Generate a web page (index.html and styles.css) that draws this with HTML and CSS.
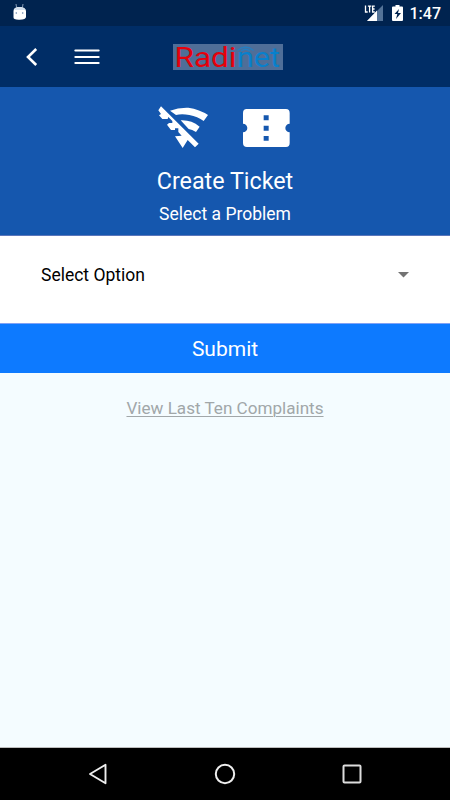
FILE: index.html
```html
<!DOCTYPE html>
<html lang="en">
<head>
<meta charset="utf-8">
<title>Create Ticket</title>
<link rel="stylesheet" href="styles.css">
</head>
<body>
<div class="status">
  <svg class="droid" width="16" height="20" viewBox="0 0 16 20"><path d="M4.500 4 4 1M10.500 4l.5-3" stroke="#8299b5" stroke-width="1"/><path d="M1.500 8Q1.500 4 7.500 4T14 8V14Q14 16.500 7.500 16.700T1.500 14Z" fill="#fff"/><path d="M2 7Q3 4 7.500 4T13.500 7Z" fill="#d3dfed"/><circle cx="4.300" cy="10" r=".8" fill="#6682a8"/><circle cx="10.700" cy="10" r=".8" fill="#6682a8"/></svg>
  <div class="indicators">
    <svg width="20" height="18" viewBox="0 0 20 18"><path d="M19 1v16H3Z" fill="#547397"/><path d="M13 6.500V17H3Z" fill="#fff"/><path d="M0 0h11v9H0Z" fill="#00234f"/><path d="M1.500 1.500v6.500h2.200M3.900 2.100h3.400M5.600 2v6.600M10.800 2.100H8.600v5.900h2.200M8.600 5h2" fill="none" stroke="#fff" stroke-width="1.300"/></svg>
    <svg class="battery" width="12" height="18" viewBox="0 0 12 18"><path d="M3.500 1h4v1.500H10q1 0 1 1V16q0 1-1 1H1q-1 0-1-1V3.500q0-1 1-1h2.500Z" fill="#fff"/><path d="M7 5 2.500 10h2.800L4 15l5-6H6Z" fill="#00234f"/></svg>
    <span>1:47</span>
  </div>
</div>
<header class="header">
  <svg class="back" width="14" height="20" viewBox="0 0 14 20"><path d="M11.200 2 3 10l8.200 8" fill="none" stroke="#fff" stroke-width="2.600"/></svg>
  <svg class="menu" width="26" height="18" viewBox="0 0 26 18"><path d="M1.400 2.500h23.200M1.400 9h23.200M1.400 15h23.200" stroke="#fff" stroke-width="2.200" stroke-linecap="round"/></svg>
  <svg class="logo" width="110" height="26" viewBox="0 0 110 26"><path d="M0 0h110v26H0Z" fill="#4f6e98"/><text x="1.500" y="22.500" textLength="62" lengthAdjust="spacingAndGlyphs" class="logo-text red">Radi</text><text x="64" y="22.500" textLength="43" lengthAdjust="spacingAndGlyphs" class="logo-text blue">net</text><path d="M64.500 6.500q8-7 16 0M68 7q4.500-3.500 9 0" fill="none" stroke="#257fc2" stroke-width="1.300"/></svg>
</header>
<section class="hero">
  <div class="icons">
    <svg width="50" height="43" viewBox="11 19 150 129"><g fill="#fff"><path d="M20 20 133 132 122 143 100 121 85 145 62 110 82 108 72 97V86H62V91H50L38 75 44 70H54V64L42 52 40 58H24L14 47 20 43 12 32Z"/><path d="M47 33Q72 23 102 24 136 29 161 46L148 64Q130 51 105 46 82 41 65 46Z"/><path d="M79 62Q110 60 136 81L125 97Q113 89 103 88Z"/></g></svg>
    <svg width="47" height="38" viewBox="278 41 141 114"><path fill="#fff" fill-rule="evenodd" d="M289 41H407Q418 41 418 53V85A13 13 0 0 0 418 111V143Q418 155 407 155H290Q278 155 278 143V111A13 13 0 0 0 278 85V53Q278 41 289 41ZM340 60v15h15V60ZM340 91v15h15V91ZM340 122v14h15v-14Z"/></svg>
  </div>
  <h1>Create Ticket</h1>
  <p>Select a Problem</p>
</section>
<div class="select"><span>Select Option</span><svg width="11" height="6" viewBox="0 0 11 6"><path d="M0 0h11L5.500 5.500Z" fill="#737373"/></svg></div>
<button class="submit">Submit</button>
<main><a href="#">View Last Ten Complaints</a></main>
<nav>
  <svg width="20" height="22" viewBox="0 0 20 22"><path d="M17.500 1.800v18.400L2 11Z" fill="none" stroke="#eee" stroke-width="1.900" stroke-linejoin="round"/></svg>
  <svg width="22" height="22" viewBox="0 0 22 22"><circle cx="11" cy="11" r="9.200" fill="none" stroke="#eee" stroke-width="2"/></svg>
  <svg width="20" height="20" viewBox="0 0 20 20"><rect x="1.500" y="1.500" width="17" height="17" rx="1" fill="none" stroke="#ddd" stroke-width="2"/></svg>
</nav>
</body>
</html>
```
FILE: styles.css
```css
* { box-sizing: border-box; }
body {
  margin: 0;
  height: 800px;
  display: flex;
  flex-direction: column;
  font-family: Roboto, sans-serif;
  background: #f4fcff;
}
svg { display: block; flex: none; }
.status {
  height: 26px;
  background: #00234f;
  color: #fff;
  display: flex;
  justify-content: space-between;
  padding: 3px 9px 0 12px;
}
.indicators {
  display: flex;
  font-size: 16px;
  font-weight: 500;
  line-height: 22px;
}
.indicators svg { position: relative; top: 1px; left: 1px; }
.battery { margin: 0 7px 0 8px; }
.header {
  height: 61px;
  background: #002d66;
  display: flex;
  align-items: center;
  padding-left: 25px;
}
.menu { margin-left: 35px; }
.logo { margin-left: 73px; overflow: visible; }
.logo-text { font-family: Roboto, sans-serif; font-size: 27px; }
.red { fill: #e6000b; }
.blue { fill: #0880cc; }
.hero {
  height: 149px;
  padding-top: 19px;
  background: #1557ae;
  color: #fff;
  text-align: center;
  border-bottom: 1px solid #5a76bb;
}
.icons {
  display: flex;
  justify-content: center;
  align-items: center;
  gap: 35px;
  padding-right: 2px;
}
h1 {
  margin: 18px 0 0;
  font-size: 23.300px;
  font-weight: 400;
  line-height: 28px;
}
p { margin: 9px 0 0; font-size: 17.500px; line-height: 20px; }
.select {
  height: 87px;
  background: #fff;
  display: flex;
  justify-content: space-between;
  align-items: center;
  padding: 0 41px 9px;
  font-size: 17.500px;
}
.submit {
  height: 50px;
  border: 0;
  border-top: 1px solid #80a2f5;
  padding: 0;
  background: #0d7aff;
  color: #fff;
  font: 400 21px/24px Roboto, sans-serif;
}
main {
  flex: 1;
  padding-top: 25px;
  text-align: center;
  line-height: 20px;
}
main a {
  color: #a1a7a9;
  font-size: 17.100px;
  text-underline-offset: 2px;
  text-decoration-thickness: 1px;
}
nav {
  height: 53px;
  background: #000;
  border-top: 1px solid #bdbdbd;
  display: flex;
  justify-content: space-between;
  align-items: center;
  padding: 0 88px;
}
```
